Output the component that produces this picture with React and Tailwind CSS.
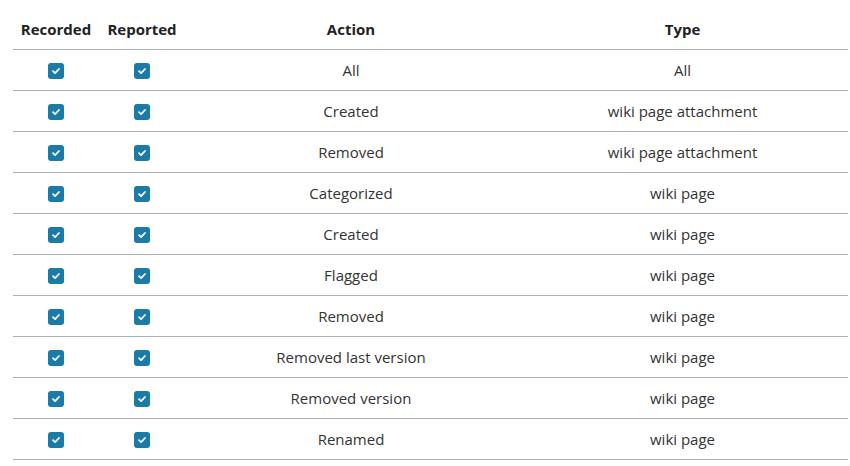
import React from 'react';

const rows = [
    ['All', 'All'],
    ['Created', 'wiki page attachment'],
    ['Removed', 'wiki page attachment'],
    ['Categorized', 'wiki page'],
    ['Created', 'wiki page'],
    ['Flagged', 'wiki page'],
    ['Removed', 'wiki page'],
    ['Removed last version', 'wiki page'],
    ['Removed version', 'wiki page'],
    ['Renamed', 'wiki page'],
];

const Check = () => (
    <span className="inline-flex items-center justify-center w-4 h-4 rounded-[3px] bg-[#1a7ba6] align-middle">
        <svg width="10" height="10" viewBox="0 0 10 10">
            <path d="M2 5.2 L4.1 7.1 L8 3" fill="none" stroke="white" strokeWidth="1.8" strokeLinecap="round" strokeLinejoin="round" />
        </svg>
    </span>
);

const App = () => {
    return (
        <div className="bg-white w-[850px] h-[466px] px-[13px] pt-[10px] font-['Open_Sans',sans-serif] text-[#333]">
            <table className="w-[835px] border-collapse table-fixed">
                <colgroup>
                    <col className="w-[86px]" />
                    <col className="w-[86px]" />
                    <col className="w-[332px]" />
                    <col className="w-[331px]" />
                </colgroup>
                <thead>
                    <tr className="h-[39px] border-b border-[#a9b1b9]">
                        <th className="text-[15px] font-bold text-[#222] text-center align-middle">Recorded</th>
                        <th className="text-[15px] font-bold text-[#222] text-center align-middle">Reported</th>
                        <th className="text-[15px] font-bold text-[#222] text-center align-middle">Action</th>
                        <th className="text-[15px] font-bold text-[#222] text-center align-middle">Type</th>
                    </tr>
                </thead>
                <tbody>
                    {rows.map(([action, type], i) => (
                        <tr key={i} className="h-[41px] border-b border-[#a9b1b9]">
                            <td className="text-center align-middle"><Check /></td>
                            <td className="text-center align-middle"><Check /></td>
                            <td className="text-center align-middle text-[15px] pt-[2px]">{action}</td>
                            <td className="text-center align-middle text-[15px] pt-[2px]">{type}</td>
                        </tr>
                    ))}
                </tbody>
            </table>
        </div>
    );
};

export default App;
